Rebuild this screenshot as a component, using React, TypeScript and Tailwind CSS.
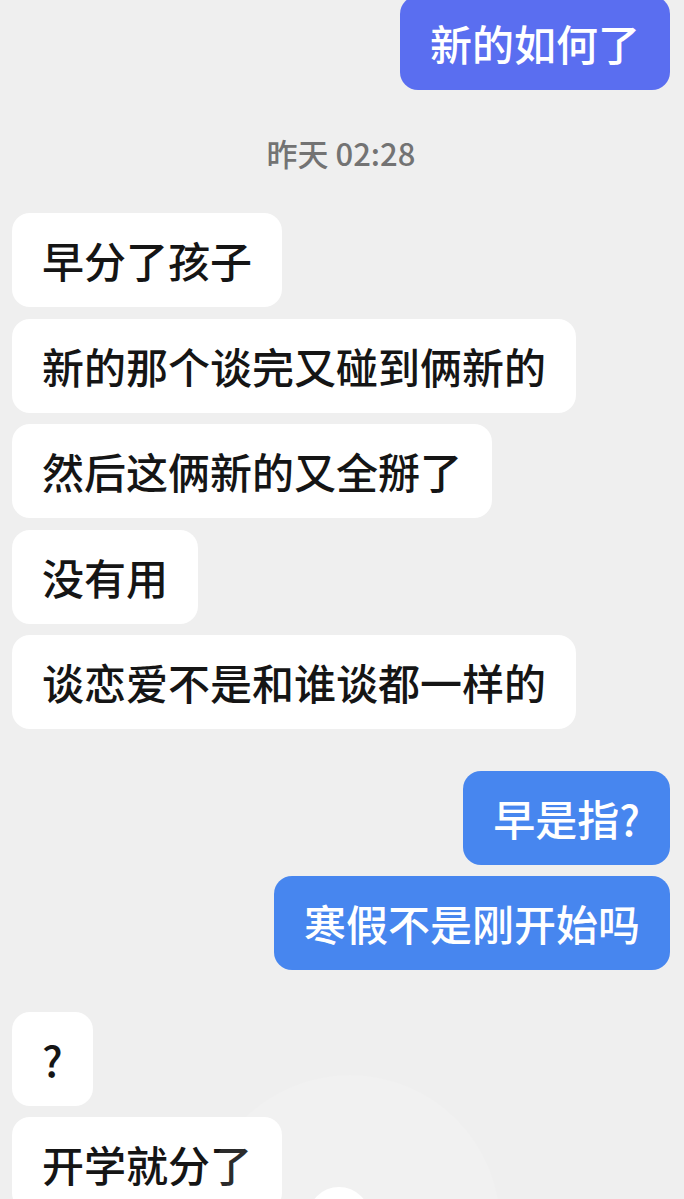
export default function App() {
  const messages = [
    { side: 'me', color: 'indigo', text: '新的如何了' },
    { side: 'time', text: '昨天 02:28' },
    { side: 'them', text: '早分了孩子' },
    { side: 'them', text: '新的那个谈完又碰到俩新的' },
    { side: 'them', text: '然后这俩新的又全掰了' },
    { side: 'them', text: '没有用' },
    { side: 'them', text: '谈恋爱不是和谁谈都一样的' },
    { side: 'me', color: 'blue', text: '早是指?', gap: true },
    { side: 'me', color: 'blue', text: '寒假不是刚开始吗' },
    { side: 'them', text: '?', gap: true },
    { side: 'them', text: '开学就分了' },
  ]

  return (
    <div
      className="relative h-[1199px] w-[684px] overflow-hidden bg-[#efefef]"
      style={{ fontFamily: '"Noto Sans CJK SC", "Noto Sans", sans-serif' }}
    >
      <div className="-mt-[4px] flex flex-col gap-[11.5px] px-[14px] pl-[12px]">
        {messages.map((m, i) => {
          if (m.side === 'time') {
            return (
              <div
                key={i}
                className="mt-[34px] mb-[32px] h-[34px] text-center text-[31px] font-medium leading-[34px] text-[#737373]"
              >
                {m.text}
              </div>
            )
          }
          const mine = m.side === 'me'
          return (
            <div
              key={i}
              className={`flex ${mine ? 'justify-end' : 'justify-start'} ${m.gap ? 'mt-[30px]' : ''}`}
            >
              <div
                className={`rounded-[18px] px-[30px] py-[24px] text-[42px] font-medium leading-[46px] whitespace-nowrap ${
                  mine
                    ? m.color === 'indigo'
                      ? 'bg-[#5a6ef0] text-white'
                      : 'bg-[#4786ef] text-white'
                    : 'bg-white text-[#151515]'
                }`}
              >
                {m.text}
              </div>
            </div>
          )
        })}
      </div>

      {/* faint watermark at the bottom */}
      <div className="pointer-events-none absolute left-[200px] top-[1075px] h-[300px] w-[300px] rounded-full bg-white/10" />
      <div className="pointer-events-none absolute left-[308px] top-[1187px] h-[64px] w-[62px] rounded-full bg-white" />
    </div>
  )
}
